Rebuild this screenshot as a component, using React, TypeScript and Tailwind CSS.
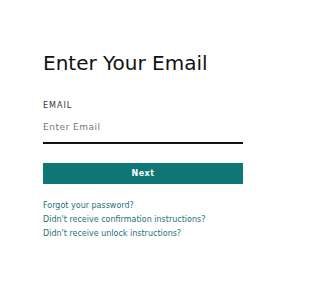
export default function App() {
  return (
    <div className="w-[288px] h-[288px] bg-white" style={{ fontFamily: '"DejaVu Sans", Verdana, sans-serif' }}>
      <div className="pt-[51px] pl-[43px] w-[243px]">
        <h1 className="text-[20px] leading-[24px] text-[#111]">Enter Your Email</h1>
        <label className="block mt-[26px] text-[8px] leading-[10px] tracking-[1px] text-[#333]">EMAIL</label>
        <div className="mt-[11px] border-b-2 border-[#111] pb-[10px] text-[9px] leading-[10px] tracking-[0.5px] text-[#777]">
          Enter Email
        </div>
        <button className="mt-[19px] w-full h-[21px] bg-[#0f7676] text-white text-[8px] font-semibold tracking-[0.5px]">
          Next
        </button>
        <div className="mt-[17px] flex flex-col gap-[4px] text-[8px] leading-[10px] text-[#27707a]">
          <a>Forgot your password?</a>
          <a>Didn't receive confirmation instructions?</a>
          <a>Didn't receive unlock instructions?</a>
        </div>
      </div>
    </div>
  );
}
